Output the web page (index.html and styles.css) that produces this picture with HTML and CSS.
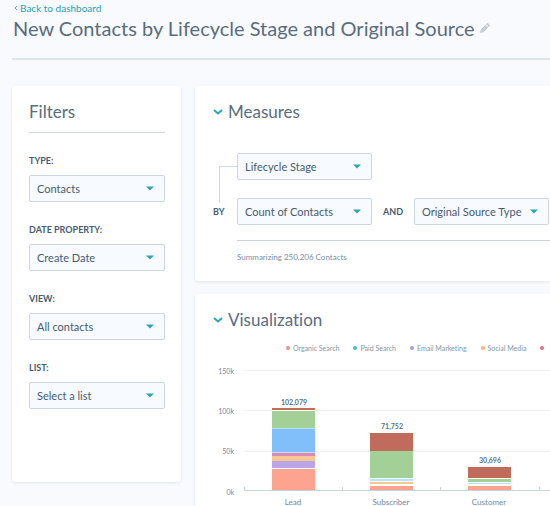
FILE: index.html
```html
<!DOCTYPE html>
<html lang="en">
<head>
<meta charset="utf-8">
<title>New Contacts by Lifecycle Stage and Original Source</title>
<link rel="stylesheet" href="styles.css">
</head>
<body>
<header class="page-header">
  <a class="back" href="#"><svg class="back-icon" viewBox="0 0 4 6"><path d="M3 1 1 3l2 2"/></svg>Back to dashboard</a>
  <div class="title-row">
    <h1>New Contacts by Lifecycle Stage and Original Source</h1>
    <button class="edit" type="button" aria-label="Edit name"><svg viewBox="0 0 12 12"><path d="M1 11l1-4 5-5 3 3-5 5zM7.700 1.300l1-1q.6-.5 1.200 0l1.800 1.800q.5.600 0 1.200l-1 1z"/></svg></button>
  </div>
</header>
<main class="layout">
  <section class="card filters">
    <h2>Filters</h2>
    <div class="field">
      <label for="type">TYPE:</label>
      <div class="select"><select id="type"><option>Contacts</option></select><svg class="caret" viewBox="0 0 8 5"><path d="M0 .5h8L4 4.500z"/></svg></div>
    </div>
    <div class="field">
      <label for="date">DATE PROPERTY:</label>
      <div class="select"><select id="date"><option>Create Date</option></select><svg class="caret" viewBox="0 0 8 5"><path d="M0 .5h8L4 4.500z"/></svg></div>
    </div>
    <div class="field">
      <label for="view">VIEW:</label>
      <div class="select"><select id="view"><option>All contacts</option></select><svg class="caret" viewBox="0 0 8 5"><path d="M0 .5h8L4 4.500z"/></svg></div>
    </div>
    <div class="field">
      <label for="list">LIST:</label>
      <div class="select"><select id="list"><option>Select a list</option></select><svg class="caret" viewBox="0 0 8 5"><path d="M0 .5h8L4 4.500z"/></svg></div>
    </div>
  </section>
  <div class="report">
    <section class="card measures">
      <h2><svg class="chevron" viewBox="0 0 10 6"><path d="M1 1l4 3.500L9 1"/></svg>Measures</h2>
      <div class="builder">
        <div class="elbow"></div>
        <div class="select"><select aria-label="Measure"><option>Lifecycle Stage</option></select><svg class="caret" viewBox="0 0 8 5"><path d="M0 .5h8L4 4.500z"/></svg></div>
        <label class="by" for="count">BY</label>
        <div class="select"><select id="count"><option>Count of Contacts</option></select><svg class="caret" viewBox="0 0 8 5"><path d="M0 .5h8L4 4.500z"/></svg></div>
        <label class="and" for="source">AND</label>
        <div class="select"><select id="source"><option>Original Source Type</option></select><svg class="caret" viewBox="0 0 8 5"><path d="M0 .5h8L4 4.500z"/></svg></div>
      </div>
      <p class="summary">Summarizing 250,206 Contacts</p>
    </section>
    <section class="card visualization">
      <h2><svg class="chevron" viewBox="0 0 10 6"><path d="M1 1l4 3.500L9 1"/></svg>Visualization</h2>
      <ul class="legend">
        <li><i class="dot organic"></i>Organic Search</li>
        <li><i class="dot paid"></i>Paid Search</li>
        <li><i class="dot email"></i>Email Marketing</li>
        <li><i class="dot social"></i>Social Media</li>
        <li><i class="dot referral"></i></li>
      </ul>
      <svg class="chart" role="img" aria-label="New contacts by lifecycle stage">
        <g class="grid">
          <line x1="34" y1="10" x2="100%" y2="10"/>
          <line x1="34" y1="50" x2="100%" y2="50"/>
          <line x1="34" y1="91" x2="100%" y2="91"/>
        </g>
        <g class="axis">
          <line x1="34" y1="130" x2="100%" y2="130"/>
          <path d="M34 127v4M132 127v4M230 127v4M329 127v4"/>
        </g>
        <g class="ticks">
          <text x="24" y="14">150k</text><text x="24" y="54">100k</text><text x="24" y="94">50k</text><text x="24" y="135">0k</text>
        </g>
        <g>
          <rect class="gap" x="62" y="48" width="43" height="82"/>
          <rect class="c-brick" x="62" y="48" width="43" height="2"/>
          <rect class="c-green" x="62" y="51" width="43" height="17"/>
          <rect class="c-sky" x="62" y="68" width="43" height="1"/>
          <rect class="c-blue" x="62" y="69" width="43" height="23"/>
          <rect class="c-sky" x="62" y="92" width="43" height="1"/>
          <rect class="c-pink" x="62" y="93" width="43" height="3"/>
          <rect class="c-orange" x="62" y="96" width="43" height="5"/>
          <rect class="c-violet" x="62" y="101" width="43" height="7"/>
          <rect class="c-coral" x="62" y="109" width="43" height="21"/>
        </g>
        <g>
          <rect class="gap" x="160" y="80" width="43" height="50"/>
          <path class="c-brick" d="M160 91V74q0-1 1-1h41q1 0 1 1v17z"/>
          <rect class="c-green" x="160" y="91" width="43" height="27"/>
          <rect class="c-sky" x="160" y="119" width="43" height="2"/>
          <rect class="c-orange" x="160" y="122" width="43" height="2"/>
          <rect class="c-coral" x="160" y="126" width="43" height="4"/>
        </g>
        <g>
          <path class="c-brick" d="M258 118v-10q0-1 1-1h41q1 0 1 1v10z"/>
          <rect class="c-green" x="258" y="119" width="43" height="3"/>
          <rect class="c-sky" x="258" y="123" width="43" height="1"/>
          <rect class="c-coral" x="258" y="126" width="43" height="4"/>
        </g>
        <g class="values">
          <text x="84" y="45">102,079</text><text x="182" y="69">71,752</text><text x="280" y="103">30,696</text>
        </g>
        <g class="names">
          <text x="83" y="145">Lead</text><text x="181" y="145">Subscriber</text><text x="279" y="145">Customer</text>
        </g>
      </svg>
    </section>
  </div>
</main>
</body>
</html>
```
FILE: styles.css
```css
* { box-sizing: border-box; }
body {
  margin: 0;
  padding-left: 12px;
  min-height: 100vh;
  overflow: hidden;
  background: #f8fafe;
  color: #485c70;
  font-family: Lato, "Liberation Sans", sans-serif;
  font-size: 11px;
  font-variant-ligatures: none;
}
h1, h2, p, ul { margin: 0; padding: 0; font-weight: 400; }
.page-header {
  height: 60px;
  padding-top: 2px;
  border-bottom: 2px solid #dee5ed;
}
.back {
  display: flex;
  align-items: center;
  gap: 2px;
  padding-left: 2px;
  color: #269fae;
  font-size: 10px;
  line-height: 12px;
  text-decoration: none;
}
.back-icon { width: 4px; height: 6px; fill: none; stroke: #7e93a5; }
.title-row { display: flex; align-items: center; gap: 4px; padding-left: 1px; }
h1 { font-size: 20px; line-height: 28px; white-space: nowrap; color: #5a6c7e; }
.edit { padding: 0; border: 0; background: none; line-height: 0; }
.edit svg { width: 11px; height: 11px; fill: #c8ced4; }
.layout { display: flex; align-items: flex-start; gap: 14px; padding-top: 26px; }
.card { background: #fff; border-radius: 3px; box-shadow: 0 1px 3px #dfe5ef; }
h2 {
  display: flex;
  align-items: center;
  gap: 5px;
  font-size: 17px;
  line-height: 20px;
  color: #5a6c7e;
}
.filters { flex: 0 0 169px; padding: 16px 16px 73px 17px; }
.filters h2 { height: 31px; align-items: flex-start; border-bottom: 1px solid #cfd8e2; margin-bottom: 21px; }
.field { margin-bottom: 21px; }
.field:last-child { margin-bottom: 0; }
label { font-size: 9px; line-height: 14px; font-weight: 700; }
.field label { display: block; margin-bottom: 7px; }
.select { display: grid; align-items: center; }
.select select, .select .caret { grid-area: 1 / 1; }
select {
  appearance: none;
  width: 100%;
  height: 27px;
  padding: 0 7px;
  border: 1px solid #cbd6e2;
  border-radius: 2px;
  background: #f7fafe;
  color: #485c70;
  font: inherit;
}
.caret { justify-self: end; width: 8px; height: 5px; margin-right: 11px; fill: #2da5b5; pointer-events: none; }
.report { flex: 1; min-width: 0; display: grid; gap: 13px; }
.report .card { border-radius: 3px 0 0 3px; }
.measures { padding: 16px 0 17px 18px; }
.chevron { width: 10px; height: 6px; fill: none; stroke: #22a7b9; stroke-width: 2; }
.builder {
  display: grid;
  grid-template-columns: 24px 135px 42px 135px;
  row-gap: 18px;
  align-items: center;
  padding-top: 31px;
}
.builder .select:nth-child(2) { grid-column: 2 / 5; width: 135px; }
.elbow {
  align-self: start;
  height: 37px;
  margin: 13px 0 -24px 6px;
  border-top: 1px solid #d3d8df;
  border-left: 1px solid #d3d8df;
}
.and { text-align: center; }
.summary {
  margin: 15px 0 0 24px;
  padding-top: 9px;
  border-top: 1px solid #cbd3df;
  color: #7b8da3;
  font-size: 8px;
  line-height: 14px;
}
.visualization { padding: 16px 0 0 15px; min-height: 212px; }
.visualization h2 { padding-left: 3px; }
.legend {
  display: flex;
  gap: 14px;
  margin-top: 12px;
  padding-left: 76px;
  overflow: hidden;
  list-style: none;
  color: #8496ac;
  font-size: 7px;
  line-height: 12px;
  white-space: nowrap;
}
.legend li { display: flex; align-items: center; gap: 3px; }
.dot { width: 4px; height: 4px; border-radius: 2px; }
.organic { background: #f58f7e; }
.paid { background: #45bfd0; }
.email { background: #a99ade; }
.social { background: #f7b27a; }
.referral { background: #ee6a80; }
.chart { display: block; width: 100%; height: 150px; margin-top: 6px; shape-rendering: crispEdges; }
.chart text { font-size: 7px; fill: #75889f; }
.grid line { stroke: #eef2f7; }
.axis { fill: none; stroke: #c9d4e2; }
.ticks { text-anchor: end; }
.values, .names { text-anchor: middle; }
.chart .values text { font-weight: 700; fill: #5d7188; }
.chart .names text { font-size: 8px; }
.gap { fill: #fff; }
.c-brick { fill: #c16b5d; }
.c-green { fill: #a2d096; }
.c-sky { fill: #b7e3f2; }
.c-blue { fill: #81bffb; }
.c-pink { fill: #df87b6; }
.c-orange { fill: #f8c794; }
.c-violet { fill: #b9a5e8; }
.c-coral { fill: #fda390; }
```
